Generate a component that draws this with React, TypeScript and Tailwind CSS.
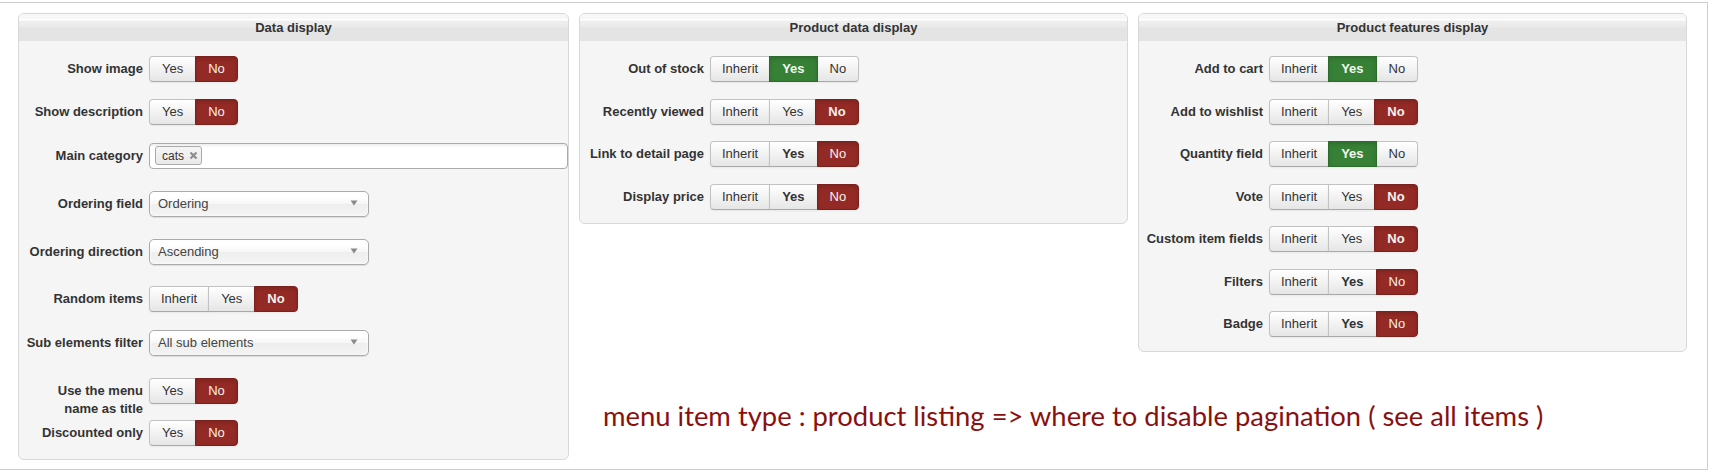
import React from "react";

type Seg = { t: string; v?: "red" | "green"; b?: boolean };

const BASE =
  "flex h-[26px] items-center justify-center border text-[13px] leading-[18px]";
const DEF =
  "bg-linear-to-b from-white to-[#e6e6e6] border-[#c2c2c2] border-b-[#a8a8a8] text-[#333] shadow-[inset_0_1px_0_rgba(255,255,255,0.2),0_1px_2px_rgba(0,0,0,0.05)]";
const RED =
  "relative z-10 bg-[#942a25] border-[#7a211d] text-[#f7f2ee] shadow-[inset_0_2px_4px_rgba(0,0,0,0.15),0_1px_2px_rgba(0,0,0,0.05)]";
const GREEN =
  "relative z-10 bg-[#378137] border-[#2d6a2d] text-[#f2f7f2] shadow-[inset_0_2px_4px_rgba(0,0,0,0.15),0_1px_2px_rgba(0,0,0,0.05)]";

function BtnGroup({ segs }: { segs: Seg[] }) {
  return (
    <div className="flex h-[26px]">
      {segs.map((s, i) => {
        const pos =
          i === 0
            ? "rounded-l-[4px]"
            : i === segs.length - 1
            ? "-ml-px rounded-r-[4px]"
            : "-ml-px";
        const look = s.v === "red" ? RED : s.v === "green" ? GREEN : DEF;
        const pad = s.t === "Inherit" ? "px-[11px]" : "px-[12px]";
        return (
          <span
            key={i}
            className={`${BASE} ${pad} ${pos} ${look} ${s.b ? "font-bold" : "font-normal"}`}
          >
            {s.t}
          </span>
        );
      })}
    </div>
  );
}

function Row({
  label,
  mt,
  children,
}: {
  label: string;
  mt: string;
  children: React.ReactNode;
}) {
  return (
    <div className={`flex items-start ${mt}`}>
      <div className="w-[119px] shrink-0 pt-[4px] text-right text-[13px] font-bold leading-[18px] text-[#333]">
        {label}
      </div>
      <div className="ml-[6px] flex min-w-0 flex-1">{children}</div>
    </div>
  );
}

function Panel({
  title,
  width,
  pb,
  children,
}: {
  title: string;
  width: string;
  pb: string;
  children: React.ReactNode;
}) {
  return (
    <div className={`${width} shrink-0 rounded-[6px] border border-[#d8d8d8] bg-[#f5f5f5]`}>
      <div className="flex h-[27px] items-center justify-center rounded-t-[5px] bg-[linear-gradient(to_bottom,#f7f7f7_0px,#f7f7f7_5px,#ffffff_5px,#ffffff_6px,#efefef_7px,#eaeaea_13px,#e4e4e4_14px,#e4e4e4_100%)] text-[13px] font-bold text-[#333]">
        {title}
      </div>
      <div className={`pl-[5px] pt-[15px] ${pb}`}>{children}</div>
    </div>
  );
}

function Select({ text }: { text: string }) {
  return (
    <div className="flex h-[26px] w-[220px] items-center justify-between rounded-[5px] border border-[#aaa] bg-[linear-gradient(#ffffff_20%,#f6f6f6_50%,#eeeeee_52%,#f4f4f4_100%)] pl-[8px] pr-[10px] text-[13px] text-[#444] shadow-[inset_0_0_3px_#fff,0_1px_1px_rgba(0,0,0,0.1)]">
      <span>{text}</span>
      <svg width="8" height="6" viewBox="0 0 8 6" className="-mt-[2px]">
        <path d="M0.5 0.5 L7.5 0.5 L4 5.5 Z" fill="#8a8a8a" />
      </svg>
    </div>
  );
}

function MultiSelect() {
  return (
    <div className="flex h-[26px] flex-1 items-start rounded-[4px] border border-[#aaa] bg-[linear-gradient(#eeeeee_1%,#ffffff_15%)] pl-[5px]">
      <div className="mt-[2px] flex h-[19px] items-center gap-[5px] rounded-[3px] border border-[#aaa] bg-linear-to-b from-[#f6f6f6] to-[#e9e9e9] pl-[6px] pr-[3px] text-[12px] text-[#333]">
        <span>cats</span>
        <svg width="9" height="9" viewBox="0 0 9 9">
          <path d="M1.5 1.5 L7.5 7.5 M7.5 1.5 L1.5 7.5" stroke="#8c8c8c" strokeWidth="2.2" />
        </svg>
      </div>
    </div>
  );
}

const YN: Seg[] = [{ t: "Yes" }, { t: "No", v: "red" }];

export default function App() {
  return (
    <div className="min-h-[471px] bg-white pt-[2px] font-['Liberation_Sans',Arial,sans-serif]">
      <div className="h-[468px] w-[1708px] border-b border-r border-t border-[#cfcfcf] bg-white">
        <div className="flex items-start gap-[10px] pl-[18px] pt-[10px]">
          <Panel title="Data display" width="w-[551px]" pb="pb-[13px]">
            <Row label="Show image" mt="mt-0">
              <BtnGroup segs={YN} />
            </Row>
            <Row label="Show description" mt="mt-[17px]">
              <BtnGroup segs={YN} />
            </Row>
            <Row label="Main category" mt="mt-[18px]">
              <MultiSelect />
            </Row>
            <Row label="Ordering field" mt="mt-[22px]">
              <Select text="Ordering" />
            </Row>
            <Row label="Ordering direction" mt="mt-[22px]">
              <Select text="Ascending" />
            </Row>
            <Row label="Random items" mt="mt-[21px]">
              <BtnGroup segs={[{ t: "Inherit" }, { t: "Yes" }, { t: "No", v: "red", b: true }]} />
            </Row>
            <Row label="Sub elements filter" mt="mt-[18px]">
              <Select text="All sub elements" />
            </Row>
            <Row label="Use the menu name as title" mt="mt-[22px]">
              <BtnGroup segs={YN} />
            </Row>
            <Row label="Discounted only" mt="mt-[2px]">
              <BtnGroup segs={YN} />
            </Row>
          </Panel>

          <div className="flex flex-col">
            <div className="flex items-start gap-[10px]">
              <Panel title="Product data display" width="w-[549px]" pb="pb-[13px]">
                <Row label="Out of stock" mt="mt-0">
                  <BtnGroup segs={[{ t: "Inherit" }, { t: "Yes", v: "green", b: true }, { t: "No" }]} />
                </Row>
                <Row label="Recently viewed" mt="mt-[17px]">
                  <BtnGroup segs={[{ t: "Inherit" }, { t: "Yes" }, { t: "No", v: "red", b: true }]} />
                </Row>
                <Row label="Link to detail page" mt="mt-[16px]">
                  <BtnGroup segs={[{ t: "Inherit" }, { t: "Yes", b: true }, { t: "No", v: "red" }]} />
                </Row>
                <Row label="Display price" mt="mt-[17px]">
                  <BtnGroup segs={[{ t: "Inherit" }, { t: "Yes", b: true }, { t: "No", v: "red" }]} />
                </Row>
              </Panel>

              <Panel title="Product features display" width="w-[549px]" pb="pb-[14px]">
                <Row label="Add to cart" mt="mt-0">
                  <BtnGroup segs={[{ t: "Inherit" }, { t: "Yes", v: "green", b: true }, { t: "No" }]} />
                </Row>
                <Row label="Add to wishlist" mt="mt-[17px]">
                  <BtnGroup segs={[{ t: "Inherit" }, { t: "Yes" }, { t: "No", v: "red", b: true }]} />
                </Row>
                <Row label="Quantity field" mt="mt-[16px]">
                  <BtnGroup segs={[{ t: "Inherit" }, { t: "Yes", v: "green", b: true }, { t: "No" }]} />
                </Row>
                <Row label="Vote" mt="mt-[17px]">
                  <BtnGroup segs={[{ t: "Inherit" }, { t: "Yes" }, { t: "No", v: "red", b: true }]} />
                </Row>
                <Row label="Custom item fields" mt="mt-[16px]">
                  <BtnGroup segs={[{ t: "Inherit" }, { t: "Yes" }, { t: "No", v: "red", b: true }]} />
                </Row>
                <Row label="Filters" mt="mt-[17px]">
                  <BtnGroup segs={[{ t: "Inherit" }, { t: "Yes", b: true }, { t: "No", v: "red" }]} />
                </Row>
                <Row label="Badge" mt="mt-[16px]">
                  <BtnGroup segs={[{ t: "Inherit" }, { t: "Yes", b: true }, { t: "No", v: "red" }]} />
                </Row>
              </Panel>
            </div>
            <p className="ml-[24px] mt-[49px] whitespace-nowrap font-['Lato',sans-serif] text-[27.4px] leading-[30px] text-[#8a1010]">
              menu item type : product listing =&gt; where to disable pagination ( see all items )
            </p>
          </div>
        </div>
      </div>
    </div>
  );
}
